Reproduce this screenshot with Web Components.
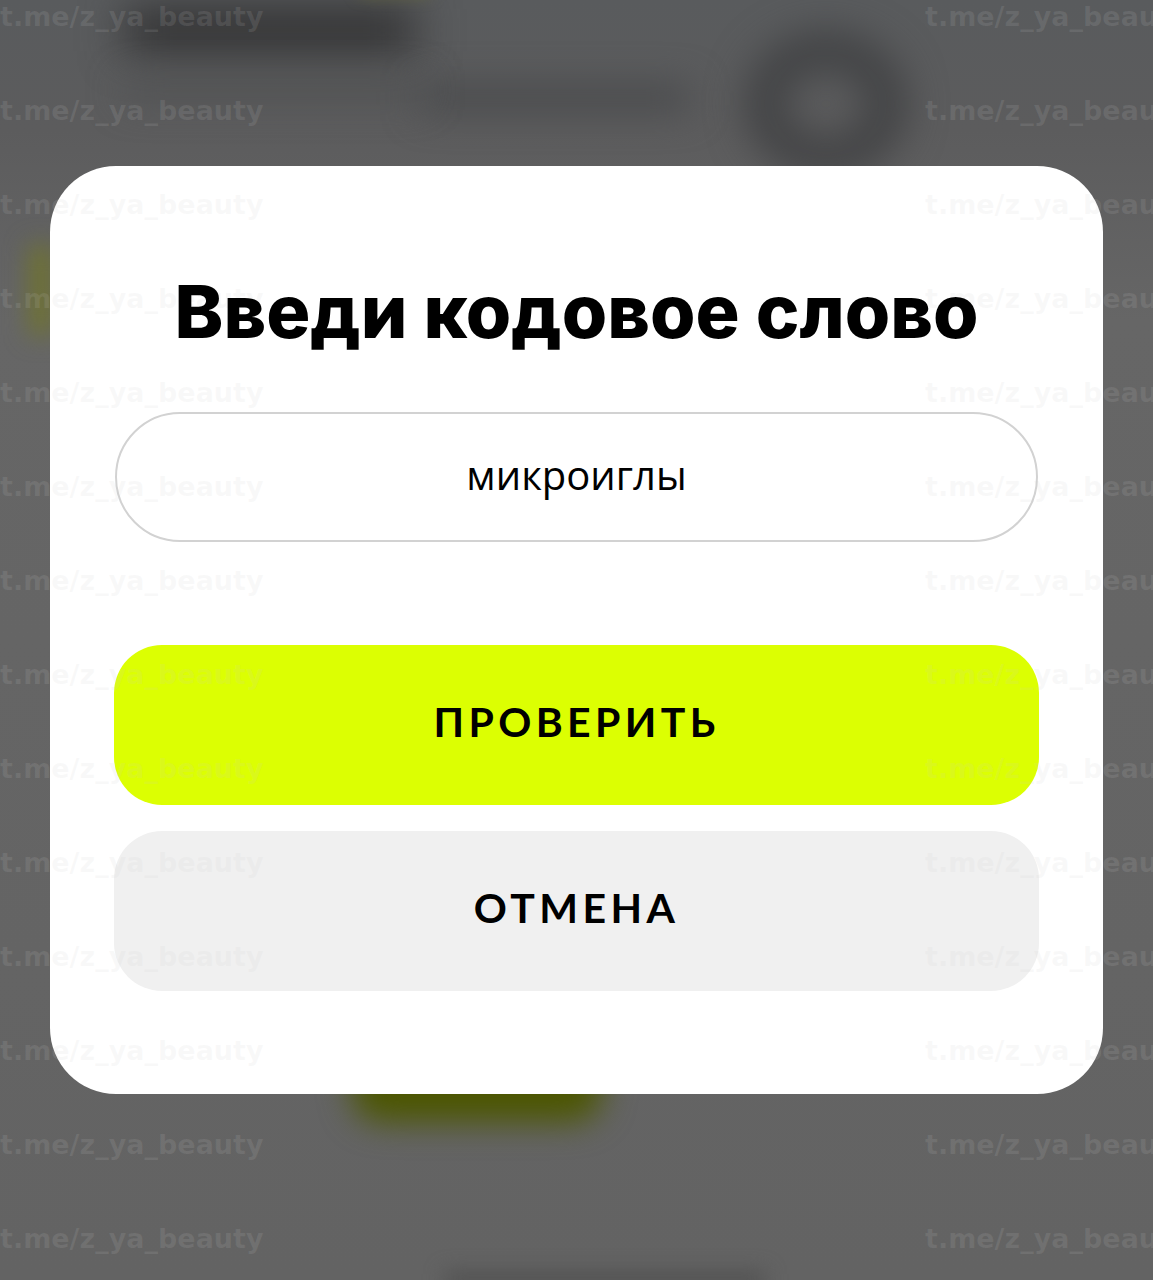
<!DOCTYPE html>
<html lang="ru">
<head>
<meta charset="utf-8">
<title>Кодовое слово</title>
<style>
    html, body { margin: 0; padding: 0; }
    body { font-family: "Inter", sans-serif; background: #646464; }
</style>
</head>
<body>
<code-stage>
    <code-dialog>
        <span slot="title">Введи кодовое слово</span>
        <code-field slot="field">микроиглы</code-field>
        <code-button slot="actions" kind="primary">ПРОВЕРИТЬ</code-button>
        <code-button slot="actions" kind="secondary">ОТМЕНА</code-button>
    </code-dialog>
</code-stage>
<script>
class CodeStage extends HTMLElement {
    constructor() {
        super()
        this.attachShadow({ mode: 'open' })

        const marks = Array.from({ length: 28 }, () => '<span>t.me/z_ya_beauty</span>').join('')

        this.shadowRoot.innerHTML = `
            <style>
                :host {
                    display: flex;
                    justify-content: center;
                    align-items: flex-start;
                    box-sizing: border-box;
                    position: relative;
                    width: 1153px;
                    height: 1280px;
                    padding-top: 166px;
                    overflow: hidden;
                    background: linear-gradient(#595b5d 0, #5c5c5d 130px, #666 320px, #636363 1280px);
                }
                .backdrop {
                    position: absolute;
                    inset: 0;
                    overflow: hidden;
                }
                .backdrop i {
                    position: absolute;
                    display: block;
                }
                .name { left: 125px; top: 8px; width: 290px; height: 44px; background: #303031; filter: blur(22px); }
                .line { left: 420px; top: 85px; width: 270px; height: 26px; background: #48494b; filter: blur(18px); }
                .line2 { left: 125px; top: 80px; width: 300px; height: 20px; background: #505152; filter: blur(18px); }
                .ring { left: 748px; top: 34px; width: 92px; height: 76px; border: 32px solid #3c3d3f; border-radius: 50%; filter: blur(20px); }
                .edge { left: 30px; top: 245px; width: 22px; height: 90px; background: #70742c; filter: blur(12px); }
                .top { left: 360px; top: -14px; width: 70px; height: 8px; background: #6a6d34; filter: blur(8px); }
                .olive { left: 352px; top: 1040px; width: 250px; height: 82px; border-radius: 30px; background: #4c5600; filter: blur(16px); }
                .foot { left: 445px; top: 1272px; width: 320px; height: 16px; background: #505050; filter: blur(10px); }
                .marks {
                    position: absolute;
                    inset: 0;
                    z-index: 2;
                    display: grid;
                    grid-template-columns: 925px 1fr;
                    grid-auto-rows: 94px;
                    font: 700 27px/34px "DejaVu Sans", sans-serif;
                    color: rgba(205, 205, 205, .13);
                    white-space: nowrap;
                    pointer-events: none;
                }
            </style>
            <div class="backdrop">
                <i class="name"></i><i class="line"></i><i class="line2"></i><i class="ring"></i>
                <i class="edge"></i><i class="top"></i><i class="olive"></i><i class="foot"></i>
            </div>
            <slot></slot>
            <div class="marks">${marks}</div>
        `
    }
}

class CodeDialog extends HTMLElement {
    constructor() {
        super()
        this.attachShadow({ mode: 'open' })
        this.shadowRoot.innerHTML = `
            <style>
                :host {
                    position: relative;
                    display: flex;
                    flex-direction: column;
                    box-sizing: border-box;
                    width: 1053px;
                    height: 928px;
                    padding: 104px 64px 0;
                    border-radius: 66px;
                    background: #fff;
                }
                h1 {
                    position: relative;
                    z-index: 3;
                    margin: 0 -40px 58px;
                    font: 800 73.5px/84px "Inter", sans-serif;
                    color: #000;
                    text-align: center;
                    white-space: nowrap;
                }
                .actions {
                    display: flex;
                    flex-direction: column;
                    gap: 26px;
                    margin-top: 103px;
                }
            </style>
            <h1><slot name="title"></slot></h1>
            <slot name="field"></slot>
            <div class="actions"><slot name="actions"></slot></div>
        `
    }
}

class CodeField extends HTMLElement {
    constructor() {
        super()
        this.attachShadow({ mode: 'open' })
        this.shadowRoot.innerHTML = `
            <style>
                :host {
                    display: flex;
                    align-items: center;
                    justify-content: center;
                    box-sizing: border-box;
                    height: 130px;
                    margin: 0 1px;
                    padding-bottom: 4px;
                    border: 2px solid #d2d2d2;
                    border-radius: 65px;
                    background: #fff;
                    font: 400 40px/46px "Open Sans", sans-serif;
                    color: #000;
                }
                span { position: relative; z-index: 3; }
            </style>
            <span><slot></slot></span>
        `
    }
}

class CodeButton extends HTMLElement {
    constructor() {
        super()
        this.attachShadow({ mode: 'open' })
        this.shadowRoot.innerHTML = `
            <style>
                :host {
                    display: flex;
                    align-items: center;
                    justify-content: center;
                    box-sizing: border-box;
                    height: 160px;
                    padding-bottom: 6px;
                    border-radius: 48px;
                    font: 700 41px/48px "Lato", "Open Sans", sans-serif;
                    letter-spacing: 4.4px;
                    color: #000;
                }
                :host([kind="primary"]) { background: #dcff02; }
                :host([kind="secondary"]) { background: #f0f0f0; }
                span { position: relative; z-index: 3; }
            </style>
            <span><slot></slot></span>
        `
    }
}

customElements.define('code-stage', CodeStage)
customElements.define('code-dialog', CodeDialog)
customElements.define('code-field', CodeField)
customElements.define('code-button', CodeButton)
</script>
</body>
</html>
